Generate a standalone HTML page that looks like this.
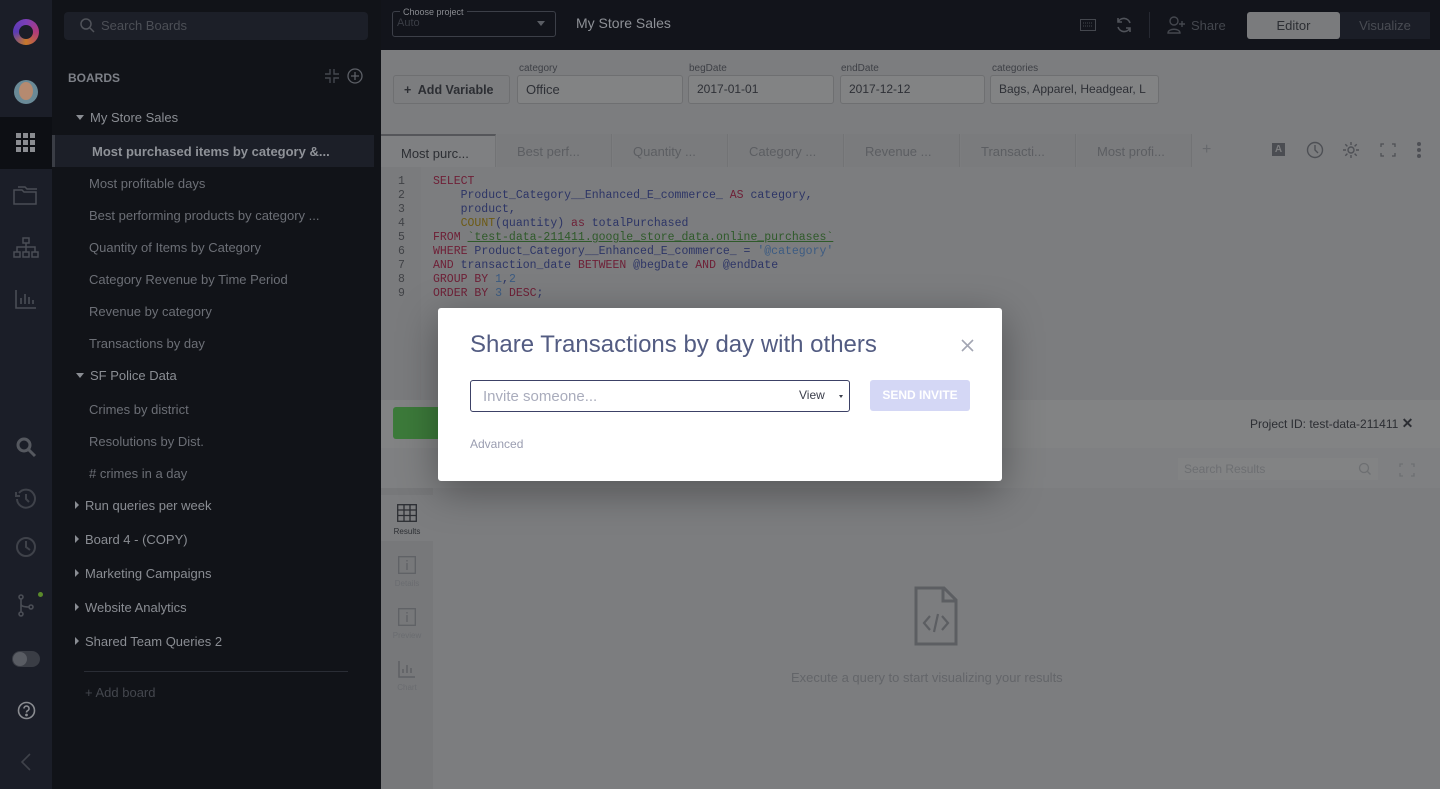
<!DOCTYPE html>
<html><head><meta charset="utf-8"><style>
*{box-sizing:border-box;margin:0;padding:0}
body{width:1440px;height:789px;overflow:hidden;position:relative;font-family:"Liberation Sans",sans-serif;background:#7c7d7f}
.a{position:absolute}
.rail{left:0;top:0;width:52px;height:789px;background:#1b1e28}
.side{left:52px;top:0;width:329px;height:789px;background:#111318}
.top{left:381px;top:0;width:1059px;height:50px;background:#12141b}
.si{position:absolute;font-size:13px;color:#6c6f76;white-space:nowrap}
.bd{position:absolute;font-size:13px;color:#8a8d93;white-space:nowrap}
.tri{display:inline-block;width:0;height:0;border-left:4px solid #8a8d93;border-top:4px solid transparent;border-bottom:4px solid transparent;margin-right:6px;vertical-align:1px}
.trd{display:inline-block;width:0;height:0;border-top:5px solid #8a8d93;border-left:4px solid transparent;border-right:4px solid transparent;margin-right:6px;vertical-align:2px}
.inp{position:absolute;top:75px;height:29px;border:1px solid #6e6f71;border-radius:3px;background:#828384;font-size:13px;color:#2e3036;padding:6px 8px;white-space:nowrap;overflow:hidden}
.lbl{position:absolute;top:63px;font-size:10px;color:#3e4046}
.tab{position:absolute;top:134px;height:33px;width:115px;font-size:13px;color:#5c5e62;padding:10px 0 0 20px;background:#7a7b7d;border-right:1px solid #727375}
.code{position:absolute;left:433px;top:175px;font-family:"Liberation Mono",monospace;font-size:11.5px;line-height:14px;color:#2d3566;white-space:pre}
.ln{position:absolute;left:398px;top:175px;font-family:"Liberation Mono",monospace;font-size:11.5px;line-height:14px;color:#404246;white-space:pre;text-align:right}
.k{color:#6e1f36}.f{color:#6d5a14}.s{color:#2f5a2a;text-decoration:underline}.n{color:#3c5b82}
.vt{position:absolute;left:381px;width:52px;text-align:center;font-size:8px;color:#6a6c70}
</style></head><body>
<div class="a rail"></div>
<div class="a side"></div>
<div class="a top"></div>
<!-- rail icons -->
<div class="a" style="left:13px;top:19px;width:26px;height:26px;border-radius:50%;background:conic-gradient(#7b3fb8,#b03a7a,#c7792a,#5a3bb5,#7b3fb8)"></div>
<div class="a" style="left:19px;top:25px;width:14px;height:14px;border-radius:50%;background:#1b1e28"></div>
<div class="a" style="left:14px;top:80px;width:24px;height:24px;border-radius:50%;background:#6a8a97"></div>
<div class="a" style="left:19px;top:82px;width:14px;height:18px;border-radius:50%;background:#b58a70"></div>
<div class="a" style="left:0;top:117px;width:52px;height:52px;background:#0d0f14"></div>
<svg class="a" style="left:16px;top:133px" width="20" height="20"><g fill="#8a8c91"><rect x="0" y="0" width="5" height="5"/><rect x="7" y="0" width="5" height="5"/><rect x="14" y="0" width="5" height="5"/><rect x="0" y="7" width="5" height="5"/><rect x="7" y="7" width="5" height="5"/><rect x="14" y="7" width="5" height="5"/><rect x="0" y="14" width="5" height="5"/><rect x="7" y="14" width="5" height="5"/><rect x="14" y="14" width="5" height="5"/></g></svg>
<svg class="a" style="left:13px;top:184px" width="26" height="22" fill="none" stroke="#4a4d55" stroke-width="1.5"><path d="M1 6h8l2 2h12v12H1z"/><path d="M5 3h7l2 2h10"/></svg>
<svg class="a" style="left:13px;top:237px" width="26" height="22" fill="none" stroke="#4a4d55" stroke-width="1.5"><rect x="10" y="1" width="6" height="5"/><rect x="1" y="15" width="6" height="5"/><rect x="10" y="15" width="6" height="5"/><rect x="19" y="15" width="6" height="5"/><path d="M13 6v4M4 15v-5h18v5M13 10v5"/></svg>
<svg class="a" style="left:15px;top:289px" width="22" height="20" fill="none" stroke="#4a4d55" stroke-width="1.6"><path d="M1 1v18h20M6 15V9M10 15V5M14 15V8M18 15V11"/></svg>
<svg class="a" style="left:15px;top:436px" width="22" height="22" fill="none" stroke="#55585f" stroke-width="3"><circle cx="9" cy="9" r="6"/><path d="M13 13l7 7"/></svg>
<svg class="a" style="left:15px;top:488px" width="22" height="22" fill="none" stroke="#3f424a" stroke-width="2"><path d="M4 5a9 9 0 1 1-2 6"/><path d="M1 4v4h4"/><path d="M11 6v5l3 3"/></svg>
<svg class="a" style="left:15px;top:536px" width="22" height="22" fill="none" stroke="#3f424a" stroke-width="2"><circle cx="11" cy="11" r="9"/><path d="M11 5v6l4 3"/></svg>
<svg class="a" style="left:17px;top:594px" width="20" height="24" fill="none" stroke="#4a4d55" stroke-width="1.6"><circle cx="4" cy="3" r="2"/><circle cx="4" cy="20" r="2"/><circle cx="14" cy="13" r="2"/><path d="M4 5v13M4 10q0 3 8 3"/></svg>
<div class="a" style="left:38px;top:592px;width:5px;height:5px;border-radius:50%;background:#5a8a2a"></div>
<div class="a" style="left:12px;top:651px;width:28px;height:16px;border-radius:8px;background:#3a3d45"></div>
<div class="a" style="left:13px;top:652px;width:14px;height:14px;border-radius:50%;background:#595c63"></div>
<svg class="a" style="left:17px;top:701px" width="19" height="19" fill="none" stroke="#8a8c91" stroke-width="1.6"><circle cx="9.5" cy="9.5" r="8"/><path d="M7 7.5a2.5 2.5 0 1 1 3.5 2.3c-.8.4-1 .9-1 1.7"/><circle cx="9.5" cy="14" r=".6" fill="#8a8c91"/></svg>
<svg class="a" style="left:20px;top:752px" width="12" height="20" fill="none" stroke="#3f424a" stroke-width="1.6"><path d="M10 2L2 10l8 8"/></svg>
<!-- sidebar -->
<div class="a" style="left:64px;top:12px;width:304px;height:28px;border-radius:4px;background:#1c1f28"></div>
<svg class="a" style="left:80px;top:18px" width="15" height="15" fill="none" stroke="#50535a" stroke-width="1.5"><circle cx="6" cy="6" r="5"/><path d="M10 10l4 4"/></svg>
<div class="si" style="left:101px;top:18px;color:#4c4f56">Search Boards</div>
<div class="si" style="left:68px;top:71px;color:#7d8087;font-weight:bold;font-size:12px">BOARDS</div>
<svg class="a" style="left:325px;top:69px" width="14" height="14" fill="none" stroke="#44474e" stroke-width="1.4"><path d="M5 0v5H0M9 0v5h5M5 14V9H0M9 14V9h5"/></svg>
<svg class="a" style="left:347px;top:68px" width="16" height="16" fill="none" stroke="#5c5f66" stroke-width="1.3"><circle cx="8" cy="8" r="7"/><path d="M8 4v8M4 8h8"/></svg>
<div class="bd" style="left:76px;top:110px"><span class="trd"></span>My Store Sales</div>
<div class="a" style="left:52px;top:135px;width:322px;height:32px;background:#1c1f28;border-left:3px solid #3a3d45"></div>
<div class="si" style="left:92px;top:144px;color:#8f9298;font-weight:bold">Most purchased items by category &amp;...</div>
<div class="si" style="left:89px;top:176px">Most profitable days</div>
<div class="si" style="left:89px;top:208px">Best performing products by category ...</div>
<div class="si" style="left:89px;top:240px">Quantity of Items by Category</div>
<div class="si" style="left:89px;top:272px">Category Revenue by Time Period</div>
<div class="si" style="left:89px;top:304px">Revenue by category</div>
<div class="si" style="left:89px;top:336px">Transactions by day</div>
<div class="bd" style="left:76px;top:368px"><span class="trd"></span>SF Police Data</div>
<div class="si" style="left:89px;top:402px">Crimes by district</div>
<div class="si" style="left:89px;top:434px">Resolutions by Dist.</div>
<div class="si" style="left:89px;top:466px"># crimes in a day</div>
<div class="bd" style="left:75px;top:498px"><span class="tri"></span>Run queries per week</div>
<div class="bd" style="left:75px;top:532px"><span class="tri"></span>Board 4 - (COPY)</div>
<div class="bd" style="left:75px;top:566px"><span class="tri"></span>Marketing Campaigns</div>
<div class="bd" style="left:75px;top:600px"><span class="tri"></span>Website Analytics</div>
<div class="bd" style="left:75px;top:634px"><span class="tri"></span>Shared Team Queries 2</div>
<div class="a" style="left:84px;top:671px;width:264px;height:1px;background:#2a2d35"></div>
<div class="si" style="left:85px;top:685px;color:#44474e">+ Add board</div>
<!-- top bar -->
<div class="a" style="left:392px;top:11px;width:164px;height:26px;border:1px solid #3c3f48;border-radius:3px"></div>
<div class="a" style="left:400px;top:7px;font-size:9px;color:#8a8c91;background:#12141b;padding:0 3px">Choose project</div>
<div class="a" style="left:397px;top:17px;font-size:11px;color:#3a3d45">Auto</div>
<div class="a" style="left:537px;top:21px;border-top:5px solid #5a5d64;border-left:4px solid transparent;border-right:4px solid transparent"></div>
<div class="a" style="left:576px;top:15px;font-size:14px;color:#8d9096">My Store Sales</div>
<svg class="a" style="left:1080px;top:19px" width="16" height="12" fill="none" stroke="#44474e"><rect x=".5" y=".5" width="15" height="11"/><path d="M3 4h10M3 7h10" stroke-dasharray="1 1"/></svg>
<svg class="a" style="left:1115px;top:16px" width="18" height="18" fill="none" stroke="#50535a" stroke-width="1.6"><path d="M15 7A6.5 6.5 0 0 0 3 6M3 11a6.5 6.5 0 0 0 12 1M3 2v4h4M15 16v-4h-4"/></svg>
<div class="a" style="left:1149px;top:12px;width:1px;height:26px;background:#262932"></div>
<svg class="a" style="left:1167px;top:16px" width="20" height="18" fill="none" stroke="#44474e" stroke-width="1.4"><circle cx="7" cy="5" r="4"/><path d="M1 17c0-5 12-5 12 0zM15 5v6M12 8h6"/></svg>
<div class="a" style="left:1191px;top:18px;font-size:13px;color:#44474e">Share</div>
<div class="a" style="left:1247px;top:12px;width:93px;height:27px;border-radius:3px;background:#7a7b7d;color:#2c2e33;font-size:13px;text-align:center;line-height:27px">Editor</div>
<div class="a" style="left:1340px;top:12px;width:90px;height:27px;background:#1b1e27;color:#494c53;font-size:13px;text-align:center;line-height:27px">Visualize</div>
<!-- variables -->
<div class="a" style="left:393px;top:75px;width:117px;height:29px;border:1px solid #6e6f71;border-radius:3px;font-size:12.5px;color:#2c2e33;font-weight:bold;padding:7px 10px">+&nbsp; Add Variable</div>
<div class="lbl" style="left:519px">category</div><div class="inp" style="left:517px;width:166px">Office</div>
<div class="lbl" style="left:689px">begDate</div><div class="inp" style="left:688px;width:146px;font-size:12px">2017-01-01</div>
<div class="lbl" style="left:841px">endDate</div><div class="inp" style="left:840px;width:145px;font-size:12px">2017-12-12</div>
<div class="lbl" style="left:992px">categories</div><div class="inp" style="left:990px;width:169px;font-size:12px">Bags, Apparel, Headgear, L</div>
<!-- tabs -->
<div class="tab" style="left:381px;background:#7f8082;color:#2c2e33;border-top:2px solid #55565a">Most purc...</div>
<div class="tab" style="left:497px">Best perf...</div>
<div class="tab" style="left:613px">Quantity ...</div>
<div class="tab" style="left:729px">Category ...</div>
<div class="tab" style="left:845px">Revenue ...</div>
<div class="tab" style="left:961px">Transacti...</div>
<div class="tab" style="left:1077px">Most profi...</div>
<div class="a" style="left:1202px;top:141px;font-size:16px;color:#66686c">+</div>
<div class="a" style="left:1272px;top:143px;width:13px;height:13px;background:#4b4d52;color:#7c7d7f;font-size:10px;text-align:center;line-height:13px;font-weight:bold">A</div>
<svg class="a" style="left:1306px;top:141px" width="18" height="18" fill="none" stroke="#4e5055" stroke-width="1.4"><circle cx="9" cy="9" r="7.5"/><path d="M9 4v5l3 3"/></svg>
<svg class="a" style="left:1342px;top:141px" width="18" height="18" fill="none" stroke="#4e5055" stroke-width="1.4"><circle cx="9" cy="9" r="3"/><path d="M9 1v3M9 14v3M1 9h3M14 9h3M3.3 3.3l2.1 2.1M12.6 12.6l2.1 2.1M3.3 14.7l2.1-2.1M12.6 5.4l2.1-2.1"/></svg>
<svg class="a" style="left:1380px;top:143px" width="16" height="14" fill="none" stroke="#4e5055" stroke-width="1.3"><path d="M4 1H1v3M12 1h3v3M4 13H1v-3M12 13h3v-3"/></svg>
<svg class="a" style="left:1416px;top:141px" width="6" height="18" fill="#4e5055"><circle cx="3" cy="3" r="2"/><circle cx="3" cy="9" r="2"/><circle cx="3" cy="15" r="2"/></svg>
<!-- editor -->
<div class="a" style="left:381px;top:167px;width:40px;height:233px;background:#7a7b7d"></div>
<div class="ln">1
2
3
4
5
6
7
8
9</div>
<div class="code"><span class="k">SELECT</span>
    Product_Category__Enhanced_E_commerce_ <span class="k">AS</span> category,
    product,
    <span class="f">COUNT</span>(quantity) <span class="k">as</span> totalPurchased
<span class="k">FROM</span> <span class="s">`test-data-211411.google_store_data.online_purchases`</span>
<span class="k">WHERE</span> Product_Category__Enhanced_E_commerce_ = <span class="n">'@category'</span>
<span class="k">AND</span> transaction_date <span class="k">BETWEEN</span> @begDate <span class="k">AND</span> @endDate
<span class="k">GROUP BY</span> <span class="n">1</span>,<span class="n">2</span>
<span class="k">ORDER BY</span> <span class="n">3</span> <span class="k">DESC</span>;</div>
<!-- run bar -->
<div class="a" style="left:381px;top:400px;width:1059px;height:48px;background:#828384"></div>
<div class="a" style="left:393px;top:407px;width:60px;height:32px;border-radius:3px;background:#3c7a3a"></div>
<div class="a" style="left:1250px;top:415px;font-size:12px;color:#2c2e33">Project ID: test-data-211411 <b style="font-size:14px">✕</b></div>
<!-- results header -->
<div class="a" style="left:381px;top:448px;width:1059px;height:40px;background:#7f8082"></div>
<div class="a" style="left:1178px;top:458px;width:200px;height:22px;background:#828384;font-size:12px;color:#6d6f72;padding:4px 6px">Search Results</div>
<svg class="a" style="left:1358px;top:462px" width="14" height="14" fill="none" stroke="#6d6f72" stroke-width="1.3"><circle cx="6" cy="6" r="4.5"/><path d="M9.5 9.5l3 3"/></svg>
<svg class="a" style="left:1399px;top:463px" width="16" height="14" fill="none" stroke="#6d6f72" stroke-width="1.3"><path d="M4 1H1v3M12 1h3v3M4 13H1v-3M12 13h3v-3"/></svg>
<!-- results -->
<div class="a" style="left:381px;top:488px;width:52px;height:301px;background:#77787a"></div>
<div class="a" style="left:381px;top:495px;width:52px;height:46px;background:#7c7d7f"></div>
<svg class="a" style="left:397px;top:504px" width="20" height="18" fill="none" stroke="#2c2e33" stroke-width="1.3"><rect x=".7" y=".7" width="18.6" height="16.6"/><path d="M.7 6h18.6M.7 11.5h18.6M7 .7v16.6M13 .7v16.6"/></svg>
<div class="vt" style="top:527px;color:#2c2e33">Results</div>
<svg class="a" style="left:398px;top:556px" width="18" height="18" fill="none" stroke="#5f6165" stroke-width="1.3"><rect x=".7" y=".7" width="16.6" height="16.6"/><path d="M9 7v7M9 4v1.5"/></svg>
<div class="vt" style="top:579px">Details</div>
<svg class="a" style="left:398px;top:608px" width="18" height="18" fill="none" stroke="#5f6165" stroke-width="1.3"><rect x=".7" y=".7" width="16.6" height="16.6"/><path d="M9 7v7M9 4v1.5"/></svg>
<div class="vt" style="top:631px">Preview</div>
<svg class="a" style="left:398px;top:660px" width="18" height="18" fill="none" stroke="#5f6165" stroke-width="1.6"><path d="M1 1v16h16M5 13V9M9 13V5M13 13V8"/></svg>
<div class="vt" style="top:683px">Chart</div>
<svg class="a" style="left:913px;top:586px" width="46" height="62" fill="none" stroke="#5c5e62" stroke-width="3"><path d="M3 2h28l12 12v44H3z M30 2v13h13"/><path d="M17 30l-6 7 6 7M29 30l6 7-6 7M25 28l-4 18" stroke-width="2.2"/></svg>
<div class="a" style="left:791px;top:670px;font-size:13px;color:#636569">Execute a query to start visualizing your results</div>
<!-- modal -->
<div class="a" style="left:438px;top:308px;width:564px;height:173px;background:#fff;border-radius:3px;box-shadow:0 10px 40px rgba(0,0,0,.35)"></div>
<div class="a" style="left:470px;top:331px;font-size:24px;color:#535c82">Share Transactions by day with others</div>
<svg class="a" style="left:961px;top:339px" width="13" height="13" stroke="#a3a6b3" stroke-width="1.6"><path d="M1 1l11 11M12 1L1 12"/></svg>
<div class="a" style="left:470px;top:380px;width:380px;height:32px;border:1.3px solid #3c4166;border-radius:3px"></div>
<div class="a" style="left:483px;top:388px;font-size:15px;color:#a9acbc">Invite someone...</div>
<div class="a" style="left:799px;top:388px;font-size:12px;color:#3a3d4a">View</div>
<div class="a" style="left:839px;top:395px;border-top:3px solid #3a3d4a;border-left:2.5px solid transparent;border-right:2.5px solid transparent"></div>
<div class="a" style="left:870px;top:380px;width:100px;height:31px;border-radius:3px;background:#d4d7f5;color:#fff;font-size:12px;font-weight:bold;text-align:center;line-height:31px">SEND INVITE</div>
<div class="a" style="left:470px;top:437px;font-size:12px;color:#9a9db0">Advanced</div>
</body></html>
